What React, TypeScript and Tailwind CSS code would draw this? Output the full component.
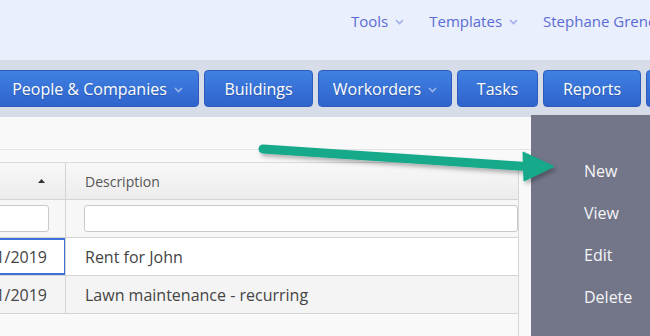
const topLinks = ["Tools", "Templates", "Stephane Greneaux"];

const navButtons = [
  { label: "People & Companies", menu: true, cls: "w-[203px] -ml-[4px]" },
  { label: "Buildings", menu: false, cls: "w-[109px]" },
  { label: "Workorders", menu: true, cls: "w-[134px]" },
  { label: "Tasks", menu: false, cls: "w-[81px]" },
  { label: "Reports", menu: false, cls: "w-[98px]" },
  { label: "Accounting", menu: true, cls: "w-[140px]" },
];

const rows = [
  { date: "01/01/2019", desc: "Rent for John", selected: true },
  { date: "02/01/2019", desc: "Lawn maintenance - recurring", selected: false },
];

const actions = ["New", "View", "Edit", "Delete"];

function Chevron({ className }: { className: string }) {
  return (
    <svg width="9" height="6" viewBox="0 0 9 6" className={className}>
      <polyline points="1,1 4.5,4.5 8,1" fill="none" stroke="currentColor" strokeWidth="1.6" />
    </svg>
  );
}

export default function App() {
  return (
    <div className="relative w-[650px] h-[336px] overflow-hidden font-['Open_Sans',sans-serif]">
      {/* top bar */}
      <div className="h-[60px] bg-[#e9effc] flex items-center pl-[351px] gap-[25px] whitespace-nowrap">
        {topLinks.map((l) => (
          <div key={l} className="flex items-center gap-[7px] text-[15px] text-[#5a6cd4] -mt-[18px]">
            {l}
            <Chevron className="text-[#a3aeea] mt-[2px]" />
          </div>
        ))}
      </div>

      {/* main nav */}
      <div className="h-[57px] bg-[#d7dce9] flex items-start pt-[10px] gap-[5px] whitespace-nowrap">
        {navButtons.map((b) => (
          <div
            key={b.label}
            className={`${b.cls} shrink-0 h-[37px] rounded-[4px] border border-[#2c5bbd] bg-gradient-to-b from-[#4081e2] to-[#2f63cc] flex items-center justify-center gap-[7px] text-white text-[16px] [text-shadow:0_1px_1px_rgba(0,0,0,0.2)]`}
          >
            {b.label}
            {b.menu && <Chevron className="text-[#9db5ec] mt-[2px]" />}
          </div>
        ))}
      </div>

      {/* content */}
      <div className="flex h-[219px]">
        <div className="flex-1 bg-[#f9f9f9] flex flex-col">
          <div className="h-[32px]" />
          <div className="flex-1 border-t border-[#e4e4e4] pt-[12px] pr-[12px] flex flex-col">
            <div className="flex-1 border-r border-[#d6d6d6]">
              <div className="grid grid-cols-[66px_1fr] border-t border-[#dadada]">
                {/* header */}
                <div className="h-[37px] border-r border-b border-[#d4d4d4] bg-gradient-to-b from-[#f8f8f8] to-[#ececec] flex items-center justify-end pr-[20px]">
                  <svg width="7" height="4" viewBox="0 0 7 4">
                    <polygon points="0,4 3.5,0 7,4" fill="#333" />
                  </svg>
                </div>
                <div className="h-[37px] border-b border-[#d4d4d4] bg-gradient-to-b from-[#f8f8f8] to-[#ececec] flex items-center pl-[19px] text-[14px] text-[#555]">
                  Description
                </div>

                {/* filter row */}
                <div className="h-[38px] border-r border-b border-[#d4d4d4] bg-[#f7f7f7] flex items-center">
                  <div className="-ml-[8px] w-[57px] h-[27px] rounded-[3px] border border-[#c9c9c9] bg-white" />
                </div>
                <div className="h-[38px] border-b border-[#d4d4d4] bg-[#f7f7f7] flex items-center pl-[18px]">
                  <div className="flex-1 h-[27px] rounded-[3px] border border-[#c9c9c9] bg-white" />
                </div>

                {/* rows */}
                {rows.map((r) => (
                  <div key={r.desc} className="contents">
                    <div
                      className={`h-[38px] border-b border-r border-[#d4d4d4] flex items-center justify-end overflow-hidden text-[16px] text-[#444] relative ${
                        r.selected ? "bg-white" : "bg-[#f4f4f4]"
                      }`}
                    >
                      <span className="whitespace-nowrap pr-[18px]">{r.date}</span>
                      {r.selected && (
                        <div className="absolute -left-[4px] -right-px top-0 bottom-0 border-2 border-[#3d70d8]" />
                      )}
                    </div>
                    <div
                      className={`h-[38px] border-b border-[#d4d4d4] flex items-center pl-[19px] text-[16px] text-[#444] whitespace-nowrap ${
                        r.selected ? "bg-white" : "bg-[#f4f4f4]"
                      }`}
                    >
                      {r.desc}
                    </div>
                  </div>
                ))}
              </div>
            </div>
          </div>
        </div>

        {/* action panel */}
        <div className="w-[119px] -mt-[2px] bg-[#737589] flex flex-col pt-[35px] pl-[53px]">
          {actions.map((a) => (
            <div key={a} className="h-[42px] flex items-center text-[16px] text-[#f5f5f7]">
              {a}
            </div>
          ))}
        </div>
      </div>

      {/* annotation arrow */}
      <svg className="absolute inset-0 pointer-events-none" width="650" height="336" viewBox="0 0 650 336">
        <defs>
          <filter id="sh" x="-10%" y="-50%" width="120%" height="200%">
            <feDropShadow dx="2" dy="3" stdDeviation="2" floodColor="#000" floodOpacity="0.3" />
          </filter>
        </defs>
        <g filter="url(#sh)" fill="#13a98a" stroke="#13a98a">
          <line x1="263" y1="149" x2="527" y2="166.5" strokeWidth="9" strokeLinecap="round" />
          <polygon points="523,152 554,166.5 524,181" strokeWidth="1" strokeLinejoin="round" />
        </g>
      </svg>
    </div>
  );
}
